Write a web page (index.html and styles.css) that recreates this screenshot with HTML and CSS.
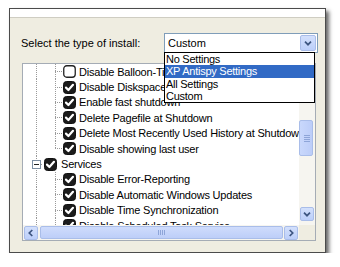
FILE: index.html
```html
<!DOCTYPE html>
<html lang="en">
<head>
  <meta charset="UTF-8">
  <title>XP Antispy Install Type</title>
  <link rel="stylesheet" href="styles.css">
</head>
<body>
  <svg class="defs" width="0" height="0" aria-hidden="true">
    <defs>
      <symbol id="chk-on" viewBox="0 0 13 13">
        <rect x="0.5" y="0.5" width="12" height="12" rx="3" fill="#1b1b1b" stroke="#111"/>
        <path d="M3 6.6 L5.4 9 L10 3.8" fill="none" stroke="#fff" stroke-width="2.2" stroke-linecap="round" stroke-linejoin="round"/>
      </symbol>
      <symbol id="chk-off" viewBox="0 0 13 13">
        <rect x="0.75" y="0.75" width="11.5" height="11.5" rx="3" fill="#fff" stroke="#222" stroke-width="1.3"/>
      </symbol>
      <symbol id="chev-down" viewBox="0 0 14 14">
        <path d="M3.5 5.5 L7 9 L10.5 5.5" fill="none" stroke="#3d5580" stroke-width="2"/>
      </symbol>
      <symbol id="chev-left" viewBox="0 0 14 14">
        <path d="M8.5 3.5 L5 7 L8.5 10.5" fill="none" stroke="#3d5580" stroke-width="2"/>
      </symbol>
      <symbol id="chev-right" viewBox="0 0 14 14">
        <path d="M5.5 3.5 L9 7 L5.5 10.5" fill="none" stroke="#3d5580" stroke-width="2"/>
      </symbol>
    </defs>
  </svg>

  <div class="window">
    <div class="strip"></div>
    <div class="panel">
      <div class="install-row">
        <span class="install-label">Select the type of install:</span>
        <div class="combo">
          <span class="combo-value">Custom</span>
          <span class="arrow-btn"><svg><use href="#chev-down"/></svg></span>
          <ul class="combo-list">
            <li>No Settings</li>
            <li class="selected">XP Antispy Settings</li>
            <li>All Settings</li>
            <li>Custom</li>
          </ul>
        </div>
      </div>

      <div class="tree-box">
        <div class="tree">
          <div class="row"><span class="guide"></span><span class="branch"></span><svg class="chk"><use href="#chk-off"/></svg><span class="text">Disable Balloon-Tips</span></div>
          <div class="row"><span class="guide"></span><span class="branch"></span><svg class="chk"><use href="#chk-on"/></svg><span class="text">Disable Diskspace Warning</span></div>
          <div class="row"><span class="guide"></span><span class="branch"></span><svg class="chk"><use href="#chk-on"/></svg><span class="text">Enable fast shutdown</span></div>
          <div class="row"><span class="guide"></span><span class="branch"></span><svg class="chk"><use href="#chk-on"/></svg><span class="text">Delete Pagefile at Shutdown</span></div>
          <div class="row"><span class="guide"></span><span class="branch"></span><svg class="chk"><use href="#chk-on"/></svg><span class="text">Delete Most Recently Used History at Shutdown</span></div>
          <div class="row"><span class="guide"></span><span class="branch last"></span><svg class="chk"><use href="#chk-on"/></svg><span class="text">Disable showing last user</span></div>
          <div class="row"><span class="guide expander"><span class="exp-box"></span></span><svg class="chk parent"><use href="#chk-on"/></svg><span class="text parent-text">Services</span></div>
          <div class="row"><span class="guide"></span><span class="branch"></span><svg class="chk"><use href="#chk-on"/></svg><span class="text">Disable Error-Reporting</span></div>
          <div class="row"><span class="guide"></span><span class="branch"></span><svg class="chk"><use href="#chk-on"/></svg><span class="text">Disable Automatic Windows Updates</span></div>
          <div class="row"><span class="guide"></span><span class="branch"></span><svg class="chk"><use href="#chk-on"/></svg><span class="text">Disable Time Synchronization</span></div>
          <div class="row"><span class="guide"></span><span class="branch"></span><svg class="chk"><use href="#chk-on"/></svg><span class="text">Disable Scheduled Task Service</span></div>
        </div>

        <div class="vscroll">
          <span class="vtrack"><span class="vthumb"></span></span>
          <span class="arrow-btn small"><svg><use href="#chev-down"/></svg></span>
        </div>
        <div class="hscroll">
          <span class="arrow-btn small"><svg><use href="#chev-left"/></svg></span>
          <span class="hthumb"></span>
          <span class="arrow-btn small"><svg><use href="#chev-right"/></svg></span>
        </div>
        <div class="corner"></div>
      </div>
    </div>
  </div>
</body>
</html>
```

FILE: styles.css
```css
:root {
  --xp-face: #efede1;
  --xp-border: #7f9db9;
  --xp-blue-edge: #a9bde9;
  --xp-select: #316ac5;
  --dots: repeating-linear-gradient(to bottom, #9a9a9a 0 1px, transparent 1px 2px);
  --dots-h: repeating-linear-gradient(to right, #9a9a9a 0 1px, transparent 1px 2px);
}

body {
  margin: 0;
  padding: 8px 0 0 9px;
  background: #fff;
  font-family: 'Liberation Sans', Arial, sans-serif;
  font-size: 11px;
  color: #000;
}

.defs {
  position: absolute;
}

.window {
  width: 315px;
  height: 243px;
  border: 1px solid #4b4b4b;
  box-shadow: 3px 3px 4px rgba(0, 0, 0, 0.6);
  display: flex;
  flex-direction: column;
}

.strip {
  height: 8px;
  background: #fff;
  border-bottom: 1px solid #cfcdc2;
}

.panel {
  flex: 1;
  background: var(--xp-face);
  padding: 15px 0 0 11px;
}

.install-row {
  display: flex;
  align-items: center;
}

.install-label {
  width: 143px;
}

.combo {
  position: relative;
  width: 149px;
  height: 18px;
  border: 1px solid var(--xp-border);
  background: #fff;
  display: flex;
  align-items: center;
  justify-content: space-between;
  padding-left: 3px;
  box-sizing: content-box;
}

.arrow-btn {
  width: 16px;
  height: 16px;
  margin-right: 1px;
  background: linear-gradient(#d3e0fc, #bccffa);
  border: 1px solid var(--xp-blue-edge);
  border-radius: 2px;
  box-sizing: border-box;
  display: flex;
  align-items: center;
  justify-content: center;
}

.arrow-btn svg {
  width: 12px;
  height: 12px;
}

.combo-list {
  position: absolute;
  top: 100%;
  left: -1px;
  width: 149px;
  margin: 0;
  padding: 0;
  list-style: none;
  background: #fff;
  border: 1px solid #000;
  letter-spacing: -0.25px;
  z-index: 5;
}

.combo-list li {
  height: 12.25px;
  line-height: 12.25px;
  padding-left: 1px;
}

.combo-list .selected {
  background: var(--xp-select);
  color: #fff;
}

.tree-box {
  margin: 10px 0 0 1px;
  width: 292px;
  height: 176px;
  border: 1px solid #a5acb5;
  background: #fff;
  display: grid;
  grid-template-columns: 1fr 16px;
  grid-template-rows: 1fr 15px;
}

.tree {
  overflow: hidden;
  white-space: nowrap;
  letter-spacing: -0.2px;
}

.row {
  display: flex;
  align-items: center;
  height: 15.4px;
}

.guide {
  flex: none;
  width: 20px;
  height: 100%;
  background: var(--dots) 13px 0 / 1px 100% no-repeat;
}

.branch {
  flex: none;
  width: 19px;
  height: 100%;
  background: var(--dots) 12px 0 / 1px 100% no-repeat,
              var(--dots-h) 12px 50% / 7px 1px no-repeat;
}

.branch.last {
  background: var(--dots) 12px 0 / 1px 50% no-repeat,
              var(--dots-h) 12px 50% / 7px 1px no-repeat;
}

.expander {
  display: flex;
  align-items: center;
  background: var(--dots) 13px 0 / 1px 100% no-repeat,
              var(--dots-h) 18px 50% / 2px 1px no-repeat;
}

.exp-box {
  width: 9px;
  height: 9px;
  margin-left: 9px;
  box-sizing: border-box;
  border: 1px solid #7d8fa3;
  background: linear-gradient(to bottom, transparent 3px, #222 3px 4px, transparent 4px) 1px 0 / 5px 100% no-repeat,
              #fff;
}

.chk {
  flex: none;
  width: 13px;
  height: 13px;
  margin-left: 1px;
}

.text {
  margin-left: 3px;
}

.parent-text {
  margin-left: 4px;
}

.vscroll {
  background: #f6f5f0;
  display: flex;
  flex-direction: column;
  align-items: center;
  padding-bottom: 4px;
}

.vtrack {
  flex: 1;
  align-self: stretch;
  padding-top: 56px;
}

.vthumb {
  display: block;
  width: 14px;
  height: 36px;
  border: 1px solid var(--xp-blue-edge);
  border-radius: 2px;
  box-sizing: border-box;
  background: repeating-linear-gradient(to bottom, #8ea5d8 0 1px, transparent 1px 2px) 4px 14px / 6px 7px no-repeat,
              linear-gradient(to right, #c9d8fc, #bccdf8);
}

.arrow-btn.small {
  width: 14px;
  height: 14px;
}

.hscroll {
  background: #f6f5f0;
  display: flex;
  align-items: center;
  gap: 1px;
  padding: 0 0 0 1px;
}

.hthumb {
  flex: 1;
  height: 13px;
  border: 1px solid var(--xp-blue-edge);
  border-radius: 2px;
  box-sizing: border-box;
  background: repeating-linear-gradient(to right, #8ea5d8 0 1px, transparent 1px 2px) center / 7px 5px no-repeat,
              linear-gradient(#cfdcfc, #bdcef8);
}

.corner {
  background: var(--xp-face);
}
```
